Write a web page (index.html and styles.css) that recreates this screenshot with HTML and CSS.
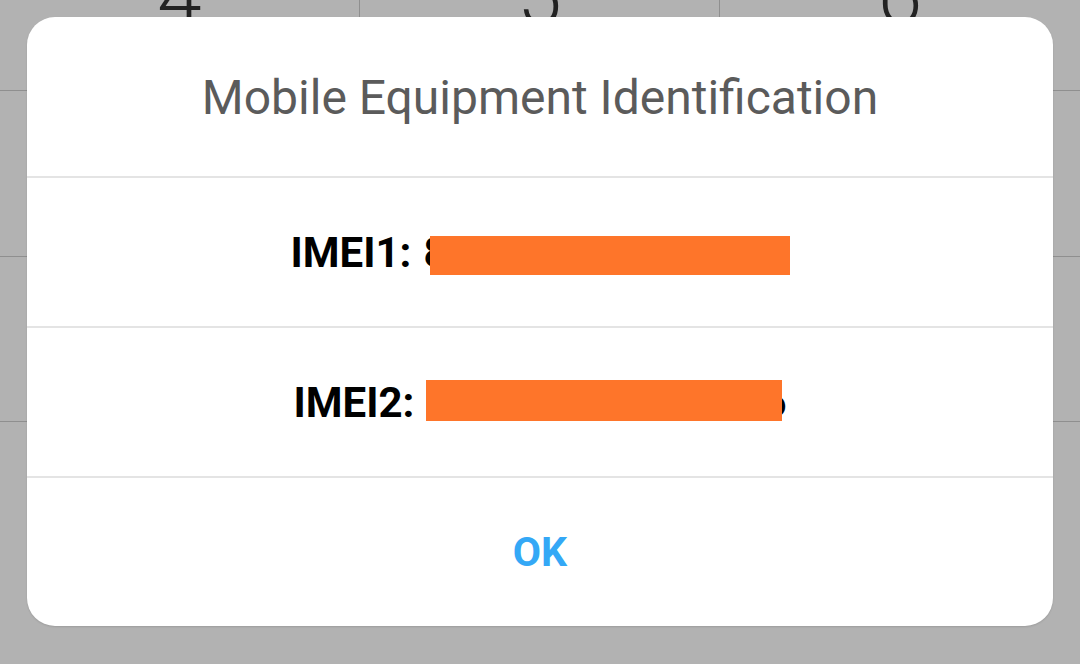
FILE: index.html
```html
<!DOCTYPE html>
<html lang="en">
<head>
  <meta charset="UTF-8">
  <title>Mobile Equipment Identification</title>
  <link rel="stylesheet" href="styles.css">
</head>
<body>
  <div class="keypad">
    <div class="key key-top"><span class="digit">4</span></div>
    <div class="key key-top"><span class="digit">5</span></div>
    <div class="key key-top last"><span class="digit">6</span></div>
    <div class="key"></div>
    <div class="key"></div>
    <div class="key last"></div>
    <div class="key"></div>
    <div class="key"></div>
    <div class="key last"></div>
    <div class="keypad-foot"></div>
  </div>

  <div class="dialog">
    <div class="dialog-title">Mobile Equipment Identification</div>

    <div class="dialog-row">
      <span class="label">IMEI1:</span>
      <span class="value">
        <span class="peek">8</span>
        <span class="redact redact-1"></span>
      </span>
    </div>

    <div class="dialog-row">
      <span class="label">IMEI2:</span>
      <span class="value">
        <span class="redact redact-2"></span>
        <span class="peek peek-end">6</span>
      </span>
    </div>

    <div class="dialog-row dialog-actions">
      <button type="button" class="btn-ok">OK</button>
    </div>
  </div>
</body>
</html>
```

FILE: styles.css
```css
html, body {
  margin: 0;
  padding: 0;
}

body {
  width: 1080px;
  height: 664px;
  overflow: hidden;
  background: #b2b2b2;
  font-family: Roboto, "Noto Sans", sans-serif;
  position: relative;
}

/* dialer behind the dim layer */
.keypad {
  display: grid;
  grid-template-columns: 360px 360px 360px;
  grid-template-rows: 91px 166px 165px 243px;
}

.key {
  border-right: 1px solid #8f8f8f;
  border-bottom: 1px solid #8f8f8f;
  box-sizing: border-box;
  overflow: hidden;
  text-align: center;
}

.key.last {
  border-right: none;
}

.keypad-foot {
  grid-column: 1 / 4;
}

.digit {
  display: block;
  font-size: 80px;
  font-weight: 300;
  line-height: 80px;
  margin-top: -43px;
  color: #222;
}

/* dialog */
.dialog {
  position: absolute;
  left: 27px;
  top: 17px;
  width: 1026px;
  height: 609px;
  background: #fff;
  border-radius: 28px;
  box-shadow: 0 1px 2px rgba(0,0,0,0.12);
  display: flex;
  flex-direction: column;
  overflow: hidden;
}

.dialog-title {
  height: 161px;
  display: flex;
  align-items: center;
  justify-content: center;
  padding-top: 2px;
  font-size: 48px;
  color: #5b5b5b;
  border-bottom: 2px solid #e4e4e4;
  box-sizing: border-box;
}

.dialog-row {
  height: 150px;
  display: flex;
  align-items: center;
  justify-content: center;
  border-bottom: 2px solid #e4e4e4;
  box-sizing: border-box;
  font-size: 42px;
  font-weight: 700;
  color: #000;
}

.label {
  margin-right: 12px;
}

.value {
  position: relative;
  z-index: 0;
  display: inline-flex;
  align-items: center;
}

.redact {
  display: inline-block;
  background: #fe752a;
}

.redact-1 {
  width: 360px;
  height: 39px;
  margin-left: -18px;
  margin-top: 6px;
}

.redact-2 {
  width: 356px;
  height: 41px;
  margin-top: -4px;
}

.peek-end {
  margin-left: -20px;
  position: relative;
  z-index: -1;
}

.dialog-actions {
  border-bottom: none;
  flex: 1;
}

.btn-ok {
  background: none;
  border: none;
  padding: 0;
  font-family: inherit;
  font-size: 41px;
  font-weight: 700;
  color: #34a8f6;
  cursor: pointer;
}
```
